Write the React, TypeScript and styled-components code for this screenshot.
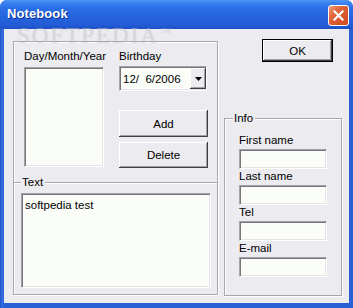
import styled, { createGlobalStyle, css } from 'styled-components';

const GlobalStyle = createGlobalStyle`
  html, body {
    margin: 0;
    padding: 0;
    background: #ffffff;
  }
  body {
    font-family: "Liberation Sans", Arial, sans-serif;
    font-size: 11px;
    color: #000;
  }
  * {
    box-sizing: border-box;
  }
`;

const FACE = '#ecebef';
const FIELD = '#fafdf8';

const etched = css`
  border: 1px solid #a7a6aa;
  box-shadow: inset 1px 1px 0 #ffffff, 1px 1px 0 #ffffff;
`;

const sunken = css`
  background: ${FIELD};
  border-top: 1px solid #a4a3a8;
  border-left: 1px solid #a4a3a8;
  border-bottom: 1px solid #ffffff;
  border-right: 1px solid #ffffff;
  box-shadow: inset 1px 1px 0 #77767b, inset -1px -1px 0 #e4e3e7;
`;

const Window = styled.div`
  position: relative;
  width: 353px;
  height: 308px;
  display: flex;
  flex-direction: column;
  background: linear-gradient(90deg, #1f4fc6 0px, #3a72e2 2px, #2a60d6 4px);
  border-radius: 7px 7px 0 0;
  overflow: hidden;
`;

const TitleBar = styled.div`
  height: 29px;
  flex: none;
  display: flex;
  align-items: center;
  justify-content: space-between;
  padding: 0 4px 0 7px;
  background: linear-gradient(
    180deg,
    #4f95f3 0%,
    #3a83f0 10%,
    #2a6ee6 30%,
    #2563dc 60%,
    #225cd6 85%,
    #1d50c6 100%
  );
`;

const Title = styled.span`
  font-family: "Liberation Sans", Arial, sans-serif;
  font-weight: bold;
  font-size: 13px;
  line-height: 14px;
  color: #ffffff;
  text-shadow: 1px 1px 0 #0c2f8f;
  letter-spacing: 0.1px;
  margin-top: -2px;
`;

const CloseButton = styled.div`
  width: 21px;
  height: 21px;
  border: 1px solid #ffffff;
  border-radius: 3px;
  background: linear-gradient(135deg, #f0a080 0%, #e0643a 35%, #cc4a1e 100%);
  display: flex;
  align-items: center;
  justify-content: center;
  margin-top: 1px;
`;

const Watermark = styled.div`
  position: absolute;
  left: 17px;
  top: 22px;
  height: 18px;
  font-family: "Liberation Serif", "Times New Roman", serif;
  font-size: 23px;
  line-height: 18px;
  letter-spacing: 2px;
  color: rgba(255, 255, 255, 0.28);
  text-shadow: 0 0 1px rgba(120, 120, 140, 0.35);
  pointer-events: none;

  sup {
    font-family: "Liberation Sans", Arial, sans-serif;
    font-size: 7px;
    letter-spacing: 0;
    vertical-align: 10px;
    margin-left: 2px;
  }
`;

const Client = styled.div`
  flex: 1;
  margin: 0 4px 5px 4px;
  background: ${FACE};
  display: flex;
  align-items: flex-start;
  gap: 6px;
  padding: 10px 7px 0 9px;
`;

const LeftPanel = styled.div`
  ${etched};
  margin-top: 2px;
  width: 205px;
  height: 254px;
  display: flex;
  flex-direction: column;
`;

const TopSection = styled.div`
  display: flex;
  gap: 15px;
  padding: 8px 0 0 10px;
`;

const Column = styled.div<{ $width: number }>`
  width: ${(p) => p.$width}px;
  display: flex;
  flex-direction: column;
`;

const Label = styled.div`
  line-height: 13px;
  height: 13px;
  font-size: 11.5px;
  white-space: nowrap;
`;

const ListBox = styled.div`
  ${sunken};
  margin-top: 4px;
  width: 80px;
  height: 100px;
`;

const Combo = styled.div`
  ${sunken};
  margin-top: 3px;
  height: 25px;
  width: 88px;
  display: flex;
  align-items: center;
  padding: 1px 0 1px 1px;
`;

const ComboText = styled.span`
  flex: 1;
  padding-left: 2px;
  font-size: 11.5px;
  white-space: pre;
`;

const DropButton = styled.div`
  width: 16px;
  height: 21px;
  background: ${FACE};
  box-shadow: inset -1px -1px 0 #404040, inset 1px 1px 0 #ffffff,
    inset -2px -2px 0 #a0a0a0;
  display: flex;
  align-items: center;
  justify-content: center;
`;

const Button = styled.button<{ $default?: boolean; $width: number; $height: number; $mt?: number }>`
  width: ${(p) => p.$width}px;
  height: ${(p) => p.$height}px;
  margin-top: ${(p) => p.$mt ?? 0}px;
  background: ${FACE};
  font-family: "Liberation Sans", Arial, sans-serif;
  font-size: 11.5px;
  color: #000;
  padding: 0;
  border: ${(p) => (p.$default ? '1px solid #000' : 'none')};
  box-shadow: inset -1px -1px 0 #404040, inset 1px 1px 0 #ffffff,
    inset -2px -2px 0 #a0a0a0;
  cursor: default;
`;

const TextSection = styled.div`
  margin-top: 8px;
  display: flex;
  flex-direction: column;
`;

const LegendRow = styled.div`
  display: flex;
  align-items: center;
  height: 13px;
`;

const LegendLine = styled.div<{ $width?: number }>`
  ${(p) => (p.$width ? `width: ${p.$width}px;` : 'flex: 1;')}
  height: 2px;
  border-top: 1px solid #a7a6aa;
  border-bottom: 1px solid #ffffff;
  margin-top: 1px;
`;

const LegendText = styled.span`
  padding: 0 2px 0 1px;
  line-height: 13px;
  font-size: 11.5px;
`;

const TextArea = styled.div`
  ${sunken};
  margin: 4px 0 0 7px;
  width: 190px;
  height: 95px;
  padding: 5px 3px;
  font-size: 11.5px;
`;

const RightColumn = styled.div`
  width: 118px;
  display: flex;
  flex-direction: column;
`;

const InfoGroup = styled.div`
  ${etched};
  position: relative;
  margin-top: 56px;
  height: 178px;
  padding: 14px 0 0 14px;
  display: flex;
  flex-direction: column;
`;

const GroupLegend = styled.span`
  position: absolute;
  top: -8px;
  left: 8px;
  padding: 0 2px 0 1px;
  background: ${FACE};
  font-size: 11.5px;
  line-height: 14px;
`;

const FieldLabel = styled.div`
  line-height: 14px;
  height: 14px;
  font-size: 11.5px;
  white-space: nowrap;
`;

const Field = styled.div`
  ${sunken};
  width: 88px;
  height: 20px;
  margin-top: 2px;
`;

const infoFields = ['First name', 'Last name', 'Tel', 'E-mail'];

const App = () => {
  return (
    <>
      <GlobalStyle />
      <Window>
        <TitleBar>
          <Title>Notebook</Title>
          <CloseButton>
            <svg width="11" height="11" viewBox="0 0 11 11">
              <path d="M1.5 1.5 L9.5 9.5 M9.5 1.5 L1.5 9.5" stroke="#fff" strokeWidth="2.2" strokeLinecap="square" />
            </svg>
          </CloseButton>
        </TitleBar>
        <Client>
          <LeftPanel>
            <TopSection>
              <Column $width={80}>
                <Label>Day/Month/Year</Label>
                <ListBox />
              </Column>
              <Column $width={89}>
                <Label>Birthday</Label>
                <Combo>
                  <ComboText>12/  6/2006</ComboText>
                  <DropButton>
                    <svg width="7" height="4" viewBox="0 0 7 4">
                      <polygon points="0,0 7,0 3.5,4" fill="#000" />
                    </svg>
                  </DropButton>
                </Combo>
                <Button $width={89} $height={27} $mt={19}>
                  Add
                </Button>
                <Button $width={89} $height={26} $mt={5}>
                  Delete
                </Button>
              </Column>
            </TopSection>
            <TextSection>
              <LegendRow>
                <LegendLine $width={7} />
                <LegendText>Text</LegendText>
                <LegendLine />
              </LegendRow>
              <TextArea>softpedia test</TextArea>
            </TextSection>
          </LeftPanel>
          <RightColumn>
            <Button $default $width={71} $height={23} style={{ alignSelf: 'flex-end', marginRight: 9 }}>
              OK
            </Button>
            <InfoGroup>
              <GroupLegend>Info</GroupLegend>
              {infoFields.map((name) => (
                <div key={name}>
                  <FieldLabel>{name}</FieldLabel>
                  <Field />
                </div>
              ))}
            </InfoGroup>
          </RightColumn>
        </Client>
        <Watermark>
          SOFTPEDIA<sup>TM</sup>
        </Watermark>
      </Window>
    </>
  );
};

export default App;
